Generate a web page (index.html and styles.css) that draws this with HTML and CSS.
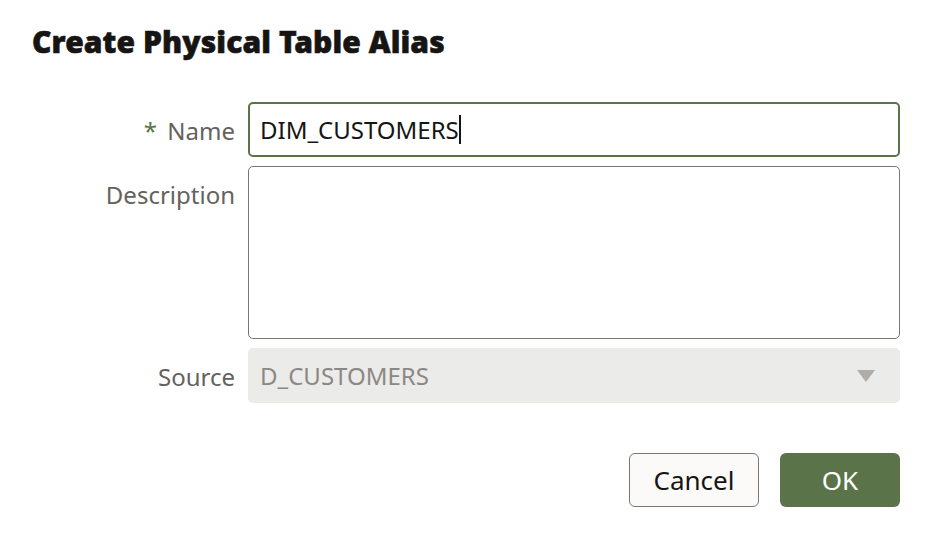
FILE: index.html
```html
<!DOCTYPE html>
<html lang="en">
<head>
    <meta charset="UTF-8">
    <meta name="viewport" content="width=device-width, initial-scale=1.0">
    <title>Create Physical Table Alias</title>
    <link rel="stylesheet" href="styles.css">
</head>
<body>
    <div class="dialog">
        <h1 class="dialog-title">Create Physical Table Alias</h1>

        <div class="form">
            <label class="form-label"><span class="required">*</span> Name</label>
            <div class="field field-focus">
                <span class="field-value">DIM_CUSTOMERS</span><span class="caret"></span>
            </div>

            <label class="form-label">Description</label>
            <div class="field field-area"></div>

            <label class="form-label">Source</label>
            <div class="field field-disabled">
                <span class="field-value">D_CUSTOMERS</span>
                <span class="select-arrow"></span>
            </div>
        </div>

        <div class="footer">
            <button class="btn btn-cancel">Cancel</button>
            <button class="btn btn-ok">OK</button>
        </div>
    </div>
</body>
</html>
```

FILE: styles.css
```css
:root {
    --text-primary: #161513;
    --text-label: #65625e;
    --text-disabled: #8b8884;
    --border-color: #7a7672;
    --accent: #5b7349;
    --disabled-bg: #ebebea;
}

body {
    font-family: "Noto Sans", sans-serif;
    background: #ffffff;
    color: var(--text-primary);
    margin: 0;
}

.dialog {
    padding: 24px 28px 0 32px;
}

.dialog-title {
    margin: 0 0 42px;
    font-size: 30px;
    line-height: 36px;
    font-weight: 900;
    letter-spacing: 0.1px;
    -webkit-text-stroke: 0.6px #161513;
    color: #161513;
}

.form {
    display: grid;
    grid-template-columns: 203px 1fr;
    column-gap: 13px;
    row-gap: 9px;
}

.form-label {
    text-align: right;
    font-size: 24px;
    line-height: 32px;
    padding-top: 13px;
    color: var(--text-label);
}

.required {
    color: var(--accent);
    margin-right: 4px;
}

.field {
    box-sizing: border-box;
    height: 55px;
    border: 1.5px solid var(--border-color);
    border-radius: 5px;
    padding: 0 12px;
    display: flex;
    align-items: center;
    font-size: 24px;
}

.field-focus {
    border: 2px solid var(--accent);
    padding-left: 10px;
}

.field-area {
    height: 173px;
}

.field-disabled {
    border: none;
    background: var(--disabled-bg);
    color: var(--text-disabled);
    justify-content: space-between;
    padding: 0 25px 0 12px;
}

.caret {
    display: inline-block;
    width: 2px;
    height: 29px;
    background: #161513;
}

.select-arrow {
    width: 0;
    height: 0;
    border-left: 9px solid transparent;
    border-right: 9px solid transparent;
    border-top: 12px solid #b0ada8;
}

.footer {
    display: flex;
    justify-content: flex-end;
    gap: 21px;
    margin-top: 50px;
}

.btn {
    box-sizing: border-box;
    height: 54px;
    font-family: "Noto Sans", sans-serif;
    font-size: 26px;
    border-radius: 6px;
    cursor: pointer;
}

.btn-cancel {
    width: 130px;
    background: #fbfaf8;
    border: 1.5px solid var(--border-color);
    color: var(--text-primary);
}

.btn-ok {
    width: 120px;
    background: var(--accent);
    border: none;
    color: #ffffff;
}
```
